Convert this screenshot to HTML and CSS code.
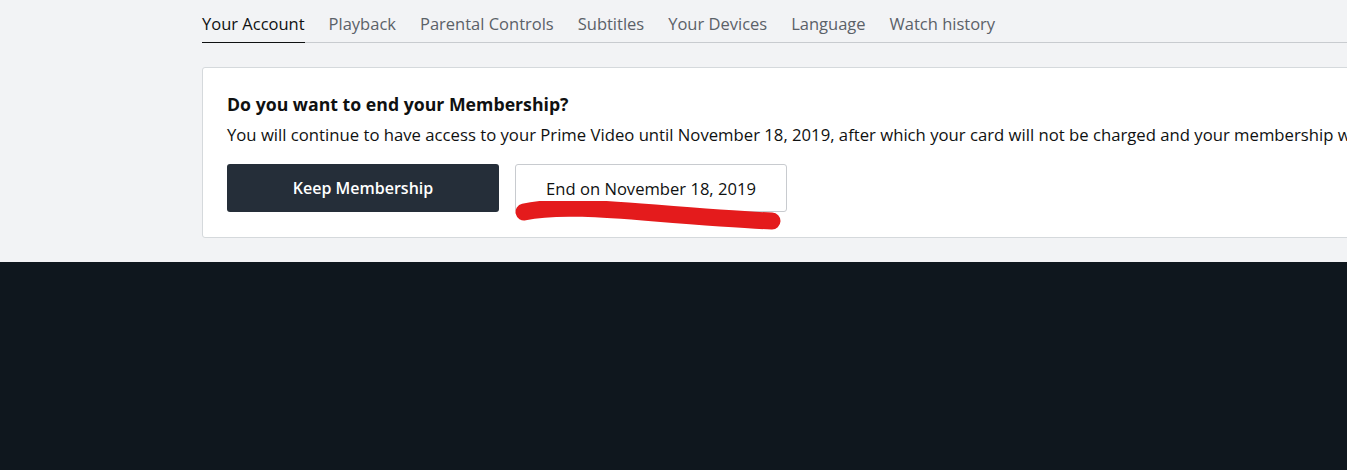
FILE: index.html
```html
<!DOCTYPE html>
<html lang="en">
<head>
    <meta charset="UTF-8">
    <meta name="viewport" content="width=device-width, initial-scale=1.0">
    <title>Your Account</title>
    <link rel="stylesheet" href="styles.css">
</head>
<body>
    <div class="top">
        <div class="page">
            <!-- Zakładki ustawień -->
            <nav class="tabs">
                <a class="tab active" href="#">Your Account</a>
                <a class="tab" href="#">Playback</a>
                <a class="tab" href="#">Parental Controls</a>
                <a class="tab" href="#">Subtitles</a>
                <a class="tab" href="#">Your Devices</a>
                <a class="tab" href="#">Language</a>
                <a class="tab" href="#">Watch history</a>
            </nav>

            <!-- Karta członkostwa -->
            <div class="card">
                <h2>Do you want to end your Membership?</h2>
                <p>You will continue to have access to your Prime Video until November 18, 2019, after which your card will not be charged and your membership will end.</p>
                <div class="buttons">
                    <button class="btn btn-dark">Keep Membership</button>
                    <div class="marked">
                        <button class="btn btn-light">End on November 18, 2019</button>
                        <svg class="scribble" width="272" height="34" viewBox="0 0 272 34">
                            <path d="M9 11 C 40 4, 90 8, 140 12 S 230 19, 257 20" fill="none" stroke="#e41b1c" stroke-width="17" stroke-linecap="round"/>
                        </svg>
                    </div>
                </div>
            </div>
        </div>
    </div>
    <div class="bottom"></div>
</body>
</html>
```

FILE: styles.css
```css
body {
    margin: 0;
    font-family: "Open Sans", Arial, sans-serif;
    color: #0f1111;
    background: #0f171e;
    overflow: hidden;
}
.top {
    background: #f2f3f5;
    height: 262px;
}
.page {
    margin-left: 202px;
    width: 1400px;
}
.tabs {
    display: flex;
    gap: 24px;
    border-bottom: 1px solid #c8cbcf;
    padding-top: 13px;
}
.tab {
    font-size: 16.5px;
    color: #5b6168;
    text-decoration: none;
    line-height: 22px;
    padding-bottom: 7px;
}
.tab.active {
    color: #0f1111;
    border-bottom: 1px solid #0f1111;
    margin-bottom: -1px;
}
.card {
    margin-top: 24px;
    background: #fff;
    border: 1px solid #d5d9dc;
    border-radius: 3px;
    padding: 24px 24px 25px;
}
h2 {
    margin: 0;
    font-size: 17.7px;
    font-weight: 700;
    line-height: 24px;
}
p {
    margin: 8px 0 0;
    font-size: 16.7px;
    line-height: 22px;
    white-space: nowrap;
}
.buttons {
    display: flex;
    gap: 16px;
    margin-top: 18px;
}
.btn {
    width: 272px;
    height: 48px;
    font-family: inherit;
    font-size: 16.6px;
    border-radius: 3px;
    cursor: pointer;
}
.btn-dark {
    background: #252e39;
    color: #fff;
    border: none;
    font-weight: 600;
    font-size: 16px;
}
.btn-light {
    background: #fff;
    color: #0f1111;
    border: 1px solid #c8cbcf;
}
.marked {
    position: relative;
}
.scribble {
    position: absolute;
    left: 0;
    top: 37px;
}
```
